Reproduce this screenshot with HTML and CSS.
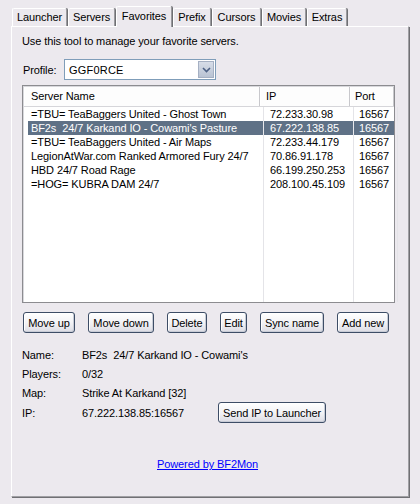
FILE: index.html
```html
<!DOCTYPE html>
<html>
<head>
<meta charset="utf-8">
<link rel="stylesheet" href="styles.css">
</head>
<body>
<div class="window">
  <div class="tabs">
    <div class="tab t-launcher">Launcher</div>
    <div class="tab t-servers">Servers</div>
    <div class="tab tab-active t-favorites">Favorites</div>
    <div class="tab t-prefix">Prefix</div>
    <div class="tab t-cursors">Cursors</div>
    <div class="tab t-movies">Movies</div>
    <div class="tab t-extras">Extras</div>
  </div>
  <div class="panel">
    <div class="intro">Use this tool to manage your favorite servers.</div>
    <div class="profile-row">
      <span class="profile-label">Profile:</span>
      <div class="select">
        <span class="select-value">GGF0RCE</span>
        <span class="select-arrow">
          <svg width="9" height="6" viewBox="0 0 9 6"><path d="M1 1 L4.5 4.5 L8 1" fill="none" stroke="#4d6185" stroke-width="1.6"/></svg>
        </span>
      </div>
    </div>
    <div class="list">
      <div class="list-head">
        <div class="hcell c-name">Server Name</div>
        <div class="hcell c-ip">IP</div>
        <div class="hcell c-port">Port</div>
      </div>
      <div class="list-body">
        <div class="row"><div class="cell c-name">=TBU= TeaBaggers United - Ghost Town</div><div class="cell c-ip">72.233.30.98</div><div class="cell c-port">16567</div></div>
        <div class="row row-selected"><div class="cell c-name">BF2s  24/7 Karkand IO - Cowami's Pasture</div><div class="cell c-ip">67.222.138.85</div><div class="cell c-port">16567</div></div>
        <div class="row"><div class="cell c-name">=TBU= TeaBaggers United - Air Maps</div><div class="cell c-ip">72.233.44.179</div><div class="cell c-port">16567</div></div>
        <div class="row"><div class="cell c-name">LegionAtWar.com Ranked Armored Fury 24/7</div><div class="cell c-ip">70.86.91.178</div><div class="cell c-port">16567</div></div>
        <div class="row"><div class="cell c-name">HBD 24/7 Road Rage</div><div class="cell c-ip">66.199.250.253</div><div class="cell c-port">16567</div></div>
        <div class="row"><div class="cell c-name">=HOG= KUBRA DAM 24/7</div><div class="cell c-ip">208.100.45.109</div><div class="cell c-port">16567</div></div>
        <div class="row row-fill"><div class="cell c-name"></div><div class="cell c-ip"></div><div class="cell c-port"></div></div>
      </div>
    </div>
    <div class="buttons">
      <button class="btn b-moveup">Move up</button>
      <button class="btn b-movedown">Move down</button>
      <button class="btn b-delete">Delete</button>
      <button class="btn b-edit">Edit</button>
      <button class="btn b-sync">Sync name</button>
      <button class="btn b-add">Add new</button>
    </div>
    <div class="details">
      <span class="d-label">Name:</span><span class="d-value">BF2s  24/7 Karkand IO - Cowami's</span>
      <span class="d-label">Players:</span><span class="d-value">0/32</span>
      <span class="d-label">Map:</span><span class="d-value">Strike At Karkand [32]</span>
      <span class="d-label">IP:</span><span class="d-ip">67.222.138.85:16567</span><span class="d-action"><button class="btn b-send">Send IP to Launcher</button></span>
    </div>
    <div class="footer"><a class="link" href="#">Powered by BF2Mon</a></div>
  </div>
</div>
</body>
</html>
```

FILE: styles.css
```css
html, body {
  margin: 0;
  padding: 0;
  background: #ece9ee;
}
body {
  font-family: "Liberation Sans", Arial, sans-serif;
  font-size: 11px;
  letter-spacing: -0.1px;
  color: #000;
  width: 420px;
  height: 504px;
  overflow: hidden;
}
.window {
  padding: 6px 0 0 11px;
}
.tabs {
  display: flex;
  align-items: flex-end;
  height: 20px;
  padding-left: 1px;
  position: relative;
  z-index: 2;
}
.tab {
  box-sizing: border-box;
  height: 18px;
  line-height: 16px;
  text-align: center;
  border-top: 1px solid #fff;
  border-left: 1px solid #fff;
  border-right: 1px solid #9a9a9e;
  box-shadow: 1px 0 0 #6f6f73;
  border-radius: 2px 2px 0 0;
  background: #ece9ee;
  margin-right: 1px;
}
.tab-active {
  height: 21px;
  line-height: 18px;
  margin-bottom: -1px;
  border-top: 1px solid #fff;
}
.t-launcher { width: 55px; }
.t-servers { width: 47px; }
.t-favorites { width: 56px; }
.t-prefix { width: 38px; }
.t-cursors { width: 49px; }
.t-movies { width: 44px; }
.t-extras { width: 40px; }

.panel {
  box-sizing: border-box;
  width: 398px;
  height: 471px;
  border-top: 1px solid #fff;
  border-left: 1px solid #fff;
  border-right: 1px solid #a0a0a4;
  border-bottom: 1px solid #a0a0a4;
  box-shadow: 1px 1px 0 #707074;
  padding: 8px 0 0 10px;
}
.intro {
  height: 13px;
  line-height: 13px;
}
.profile-row {
  display: flex;
  align-items: center;
  margin-top: 11px;
  height: 21px;
}
.profile-label {
  width: 41px;
  padding-left: 1px;
}
.select {
  box-sizing: border-box;
  width: 152px;
  height: 21px;
  border: 1px solid #7f9db9;
  background: #fff;
  display: flex;
  align-items: center;
  justify-content: space-between;
  padding: 1px;
}
.select-value {
  padding-left: 3px;
  letter-spacing: 0.2px;
}
.select-arrow {
  box-sizing: border-box;
  width: 16px;
  height: 17px;
  background: linear-gradient(#d7dde8, #b9c3d3);
  border: 1px solid #a5b0c3;
  display: flex;
  align-items: center;
  justify-content: center;
}

.list {
  box-sizing: border-box;
  margin-top: 5px;
  width: 373px;
  height: 218px;
  border: 1px solid #8c8c90;
  background: #fff;
  box-shadow: inset 1px 1px 0 #d8d8dc;
  padding: 1px 0 0 1px;
  display: flex;
  flex-direction: column;
}
.list-head {
  display: grid;
  grid-template-columns: 236px 90px 44px;
  height: 19px;
  border-bottom: 1px solid #d6d6da;
  background: #fdfdfd;
}
.hcell {
  line-height: 19px;
  border-right: 1px solid #c8c8cc;
  box-shadow: 1px 0 0 #fff inset;
}
.list-body {
  flex: 1;
  display: flex;
  flex-direction: column;
}
.row {
  display: grid;
  grid-template-columns: 236px 90px 44px;
  height: 14px;
  margin-left: 4px;
  margin-right: 0;
}
.row .c-name { margin-left: -4px; }
.row-selected {
  background: #5f7186;
  color: #fff;
}
.row-fill { flex: 1; }
.cell {
  line-height: 14px;
  white-space: pre;
  overflow: hidden;
  border-right: 1px solid #e4e4e8;
}
.row-selected .cell { border-right-color: #e8e8ec; }
.c-name { padding-left: 7px; }
.c-ip { padding-left: 6px; }
.c-port { padding-left: 5px; }
.row .c-name { padding-left: 7px; }
.row-selected .c-name { margin-left: 0; padding-left: 3px; }
.hcell.c-name { padding-left: 7px; }

.buttons {
  display: flex;
  margin-top: 9px;
  padding-left: 1px;
  gap: 13px;
}
.btn {
  box-sizing: border-box;
  height: 21px;
  padding: 0;
  font-family: inherit;
  font-size: 11px;
  letter-spacing: -0.1px;
  color: #000;
  border: 1px solid #3d4d66;
  border-radius: 3px;
  background: linear-gradient(#ffffff 0%, #f3f3f6 50%, #dcdce4 100%);
  box-shadow: inset -1px -1px 0 #c8ccd6, inset 1px 1px 0 #fff;
}
.b-moveup { width: 52px; }
.b-movedown { width: 66px; }
.b-delete { width: 40px; }
.b-edit { width: 27px; }
.b-sync { width: 64px; }
.b-add { width: 52px; }

.details {
  display: grid;
  grid-template-columns: 60px 136px 1fr;
  grid-template-rows: 18px 19px 19px 21px;
  margin-top: 13px;
  align-items: center;
}
.d-value {
  white-space: pre;
  grid-column: span 2;
}
.d-action {
  display: flex;
  align-items: center;
}
.b-send {
  width: 108px;
}
.footer {
  margin-top: 35px;
  padding-left: 135px;
}
.link {
  color: #0000ff;
  text-decoration: underline;
}
```
